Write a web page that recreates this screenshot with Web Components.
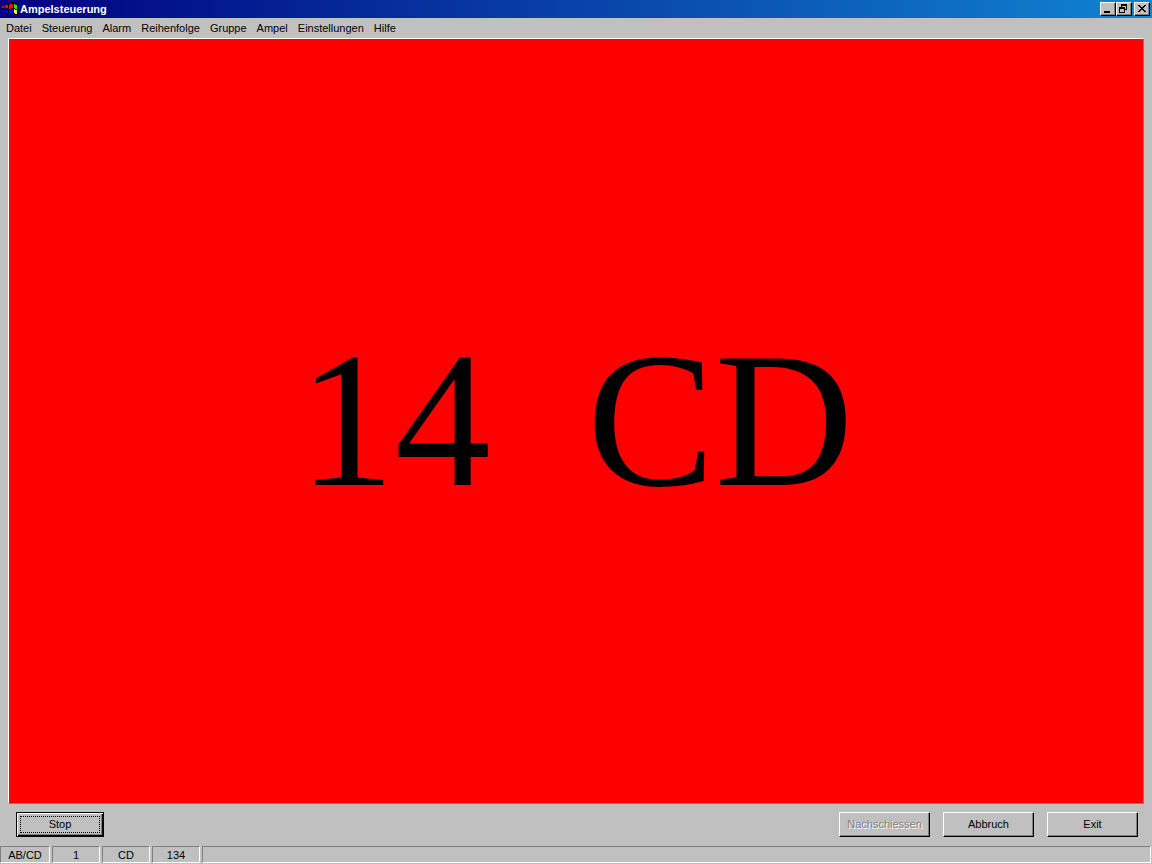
<!DOCTYPE html>
<html lang="de">
<head>
<meta charset="utf-8">
<title>Ampelsteuerung</title>
<style>
html, body {
  height: 100%;
  margin: 0;
}
body {
  background: #c0c0c0;
  color: #000;
  font: 11px/14px "Liberation Sans", Arial, sans-serif;
}
</style>
</head>
<body>
<ampel-window>
  <title-bar slot="title">Ampelsteuerung</title-bar>
  <menu-bar slot="menu">
    <menu-item>Datei</menu-item>
    <menu-item>Steuerung</menu-item>
    <menu-item>Alarm</menu-item>
    <menu-item>Reihenfolge</menu-item>
    <menu-item>Gruppe</menu-item>
    <menu-item>Ampel</menu-item>
    <menu-item>Einstellungen</menu-item>
    <menu-item>Hilfe</menu-item>
  </menu-bar>
  <ampel-display>14&nbsp;&nbsp;CD</ampel-display>
  <win-button slot="start" default>Stop</win-button>
  <win-button slot="end" disabled>Nachschiessen</win-button>
  <win-button slot="end">Abbruch</win-button>
  <win-button slot="end">Exit</win-button>
  <status-bar slot="status">
    <status-panel>AB/CD</status-panel>
    <status-panel>1</status-panel>
    <status-panel>CD</status-panel>
    <status-panel>134</status-panel>
    <status-panel wide></status-panel>
  </status-bar>
</ampel-window>

<script>
class BaseElement extends HTMLElement {
  constructor() {
    super()
    const template = document.createElement('template')
    template.innerHTML = this.constructor.html
    this.attachShadow({mode: 'open'})
    this.shadowRoot.appendChild(template.content.cloneNode(true))
  }
}

class AmpelWindow extends BaseElement {
  static html = /* HTML */`
  <style>
  :host {
    display: flex;
    flex-direction: column;
    height: 100vh;
    overflow: hidden;
  }
  main {
    flex: 1;
    display: flex;
    flex-direction: column;
    padding: 0 8px;
  }
  .buttons {
    display: flex;
    justify-content: space-between;
    padding: 8px 6px 9px 8px;
  }
  .end {
    display: flex;
    gap: 13px;
  }
  </style>
  <slot name="title"></slot>
  <slot name="menu"></slot>
  <main>
    <slot></slot>
    <div class="buttons">
      <slot name="start"></slot>
      <div class="end"><slot name="end"></slot></div>
    </div>
  </main>
  <slot name="status"></slot>`
}

class TitleBar extends BaseElement {
  static html = /* HTML */`
  <style>
  :host {
    display: flex;
    align-items: center;
    height: 18px;
    padding: 0 2px;
    background: linear-gradient(to right, #000080, #1084d0);
    color: #fff;
    font-weight: bold;
  }
  h1 {
    flex: 1;
    margin: 0 0 0 2px;
    font: inherit;
  }
  .logo {
    width: 16px;
    height: 16px;
  }
  .controls {
    display: flex;
  }
  button {
    box-sizing: border-box;
    width: 16px;
    height: 14px;
    padding: 0;
    border: 1px solid;
    border-color: #fff #000 #000 #fff;
    background: #c0c0c0;
    box-shadow: inset -1px -1px #808080;
  }
  button:last-child {
    margin-left: 2px;
  }
  button svg {
    display: block;
    width: 14px;
    height: 12px;
  }
  </style>
  <svg class="logo" viewBox="0 0 16 16" shape-rendering="crispEdges" aria-hidden="true">
    <path fill="#000" d="M7 2h2V1h4v1h3v12h-2v-1h-4v1H7v-1H6V3h1zM3 3h3v1H3zM0 4h2v1H0zM3 7h3v2H3zM0 7h2v2H0zM3 12h3v2H3zM0 12h2v1H0z"/>
    <path fill="#f00" d="M8 3h3v4H9v1H7V4h1zM3 4h3v3H3zM0 5h2v2H0z"/>
    <path fill="#0f0" d="M12 3h1v1h2v4h-2V7h-1z"/>
    <path fill="#00f" d="M8 8h3v4H9v1H7V9h1zM3 9h3v3H3zM0 9h2v2H0z"/>
    <path fill="#ff0" d="M12 8h1v1h2v4h-2v-1h-1z"/>
  </svg>
  <h1><slot></slot></h1>
  <div class="controls">
    <button aria-label="Minimieren"><svg viewBox="0 0 14 12" shape-rendering="crispEdges"><path d="M3 8h6v2H3z"/></svg></button>
    <button aria-label="Wiederherstellen"><svg viewBox="0 0 14 12" shape-rendering="crispEdges"><path fill-rule="evenodd" d="M4 1h6v6H8V6h1V3H5v1H4zM2 4h6v6H2zM3 6v3h4V6z"/></svg></button>
    <button aria-label="Schließen"><svg viewBox="0 0 14 12" shape-rendering="crispEdges"><path d="M3 2h2v1h1v1h2V3h1V2h2v1h-1v1H9v1H8v1h1v1h1v1h1v1H9V8H8V7H6v1H5v1H3V8h1V7h1V6h1V5H5V4H4V3H3z"/></svg></button>
  </div>`
}

class MenuBar extends BaseElement {
  static html = /* HTML */`
  <style>
  :host {
    display: block;
  }
  nav {
    display: flex;
    gap: 10px;
    padding: 3px 6px;
  }
  </style>
  <nav><slot></slot></nav>`
}

class MenuItem extends BaseElement {
  static html = /* HTML */`
  <style>
  :host {
    display: block;
  }
  button {
    display: block;
    padding: 0;
    border: 0;
    background: none;
    color: inherit;
    font: inherit;
  }
  </style>
  <button><slot></slot></button>`
}

class AmpelDisplay extends BaseElement {
  static html = /* HTML */`
  <style>
  :host {
    flex: 1;
    display: flex;
    align-items: center;
    justify-content: center;
    border: 1px solid;
    border-color: #fff #808080 #808080 #fff;
    background: #f00;
    font: 192px/212px "Liberation Serif", "Times New Roman", serif;
  }
  </style>
  <slot></slot>`
}

class WinButton extends BaseElement {
  static html = /* HTML */`
  <style>
  :host {
    display: block;
  }
  button {
    box-sizing: border-box;
    display: block;
    width: 91px;
    height: 25px;
    padding: 0 0 1px;
    border: 1px solid;
    border-color: #fff #000 #000 #fff;
    background: #c0c0c0;
    box-shadow: inset -1px -1px #808080;
    color: #000;
    font: inherit;
  }
  button:disabled {
    color: #808080;
    text-shadow: 1px 1px #fff;
  }
  :host([default]) button {
    width: 88px;
    border-color: #000;
    box-shadow: inset 1px 1px #fff, inset -1px -1px #000, inset -2px -2px #808080;
    outline: 1px dotted #000;
    outline-offset: -5px;
  }
  </style>
  <button><slot></slot></button>`
  connectedCallback() {
    this.shadowRoot.querySelector('button').disabled = this.hasAttribute('disabled')
  }
}

class StatusBar extends BaseElement {
  static html = /* HTML */`
  <style>
  :host {
    display: flex;
    gap: 2px;
    padding: 0 1px 1px 0;
  }
  </style>
  <slot></slot>`
}

class StatusPanel extends BaseElement {
  static html = /* HTML */`
  <style>
  :host {
    box-sizing: border-box;
    width: 48px;
    height: 17px;
    border: 1px solid;
    border-color: #808080 #fff #fff #808080;
    line-height: 16px;
    text-align: center;
  }
  :host(:first-child) {
    width: 50px;
  }
  :host([wide]) {
    flex: 1;
  }
  </style>
  <slot></slot>`
}

customElements.define('ampel-window', AmpelWindow)
customElements.define('title-bar', TitleBar)
customElements.define('menu-bar', MenuBar)
customElements.define('menu-item', MenuItem)
customElements.define('ampel-display', AmpelDisplay)
customElements.define('win-button', WinButton)
customElements.define('status-bar', StatusBar)
customElements.define('status-panel', StatusPanel)
</script>
</body>
</html>
